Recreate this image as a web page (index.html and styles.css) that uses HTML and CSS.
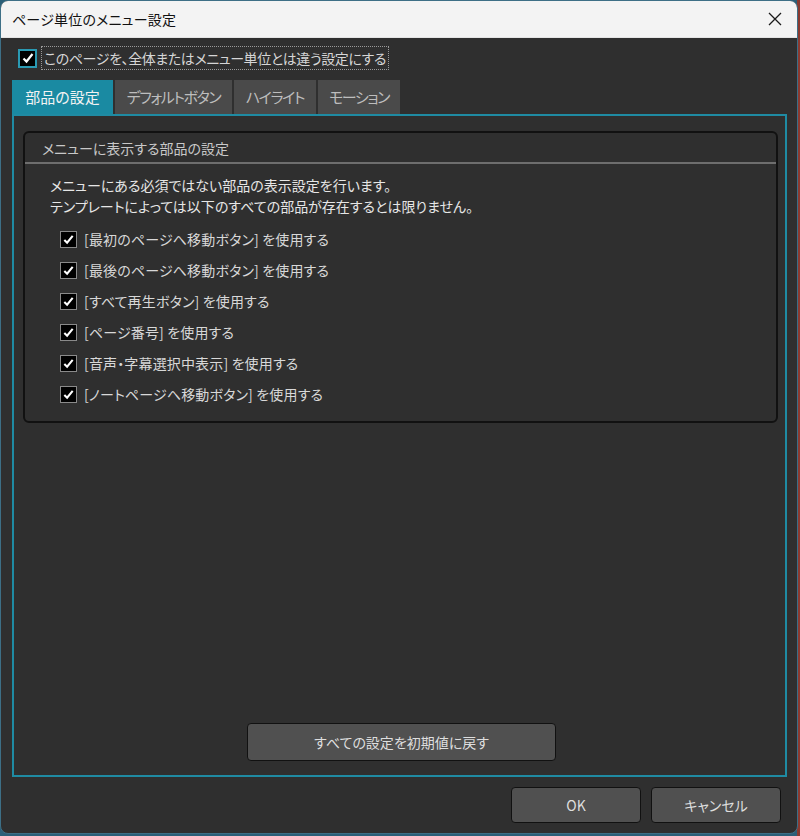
FILE: index.html
```html
<!DOCTYPE html>
<html>
<head>
	<meta charset="UTF-8">
	<title>ページ単位のメニュー設定</title>
	<link rel="stylesheet" href="styles.css">
</head>
<body>
	<div class="window">
		<div class="titlebar">
			<span class="title">ページ単位のメニュー設定</span>
			<svg class="close" width="14" height="14" viewBox="0 0 14 14"><path d="M1 1L13 13M13 1L1 13" stroke="#1a1a1a" stroke-width="1.3"/></svg>
		</div>
		<div class="content">
			<div class="override">
				<span class="chk focus">
					<svg width="14" height="14" viewBox="0 0 14 14"><path d="M2.5 7.5L5.5 10.5L11.5 3" fill="none" stroke="#fff" stroke-width="2.2"/></svg>
				</span>
				<span class="override_label">このページを、全体またはメニュー単位とは違う設定にする</span>
			</div>
			<div class="tabs">
				<div class="tab active tab_w1">部品の設定</div>
				<div class="tab kana tab_w2">デフォルトボタン</div>
				<div class="tab kana tab_w3">ハイライト</div>
				<div class="tab kana tab_w3">モーション</div>
			</div>
			<div class="panel">
				<div class="group">
					<div class="group_head">メニューに表示する部品の設定</div>
					<div class="group_body">
						<p class="desc">メニューにある必須ではない部品の表示設定を行います。<br>テンプレートによっては以下のすべての部品が存在するとは限りません。</p>
						<div class="items">
							<div class="item"><span class="chk"><svg width="13" height="13" viewBox="0 0 14 14"><path d="M2.5 7.5L5.5 10.5L11.5 3" fill="none" stroke="#fff" stroke-width="2.2"/></svg></span>[最初のページへ移動ボタン] を使用する</div>
							<div class="item"><span class="chk"><svg width="13" height="13" viewBox="0 0 14 14"><path d="M2.5 7.5L5.5 10.5L11.5 3" fill="none" stroke="#fff" stroke-width="2.2"/></svg></span>[最後のページへ移動ボタン] を使用する</div>
							<div class="item"><span class="chk"><svg width="13" height="13" viewBox="0 0 14 14"><path d="M2.5 7.5L5.5 10.5L11.5 3" fill="none" stroke="#fff" stroke-width="2.2"/></svg></span>[すべて再生ボタン] を使用する</div>
							<div class="item"><span class="chk"><svg width="13" height="13" viewBox="0 0 14 14"><path d="M2.5 7.5L5.5 10.5L11.5 3" fill="none" stroke="#fff" stroke-width="2.2"/></svg></span>[ページ番号] を使用する</div>
							<div class="item"><span class="chk"><svg width="13" height="13" viewBox="0 0 14 14"><path d="M2.5 7.5L5.5 10.5L11.5 3" fill="none" stroke="#fff" stroke-width="2.2"/></svg></span>[音声・字幕選択中表示] を使用する</div>
							<div class="item"><span class="chk"><svg width="13" height="13" viewBox="0 0 14 14"><path d="M2.5 7.5L5.5 10.5L11.5 3" fill="none" stroke="#fff" stroke-width="2.2"/></svg></span>[ノートページへ移動ボタン] を使用する</div>
						</div>
					</div>
				</div>
				<div class="reset_row">
					<div class="btn reset">すべての設定を初期値に戻す</div>
				</div>
			</div>
		</div>
		<div class="footer">
			<div class="btn">OK</div>
			<div class="btn">キャンセル</div>
		</div>
	</div>
</body>
</html>
```

FILE: styles.css
```css
*{
	margin: 0;
	padding: 0;
	box-sizing: border-box;
}
body{
	width: 800px;
	height: 836px;
	overflow: hidden;
	background: linear-gradient(to right, #2b5f78 797px, #8a3a30 797px);
	font-family: "Noto Sans CJK JP", "Noto Sans", sans-serif;
	font-feature-settings: "palt";
}
.window{
	width: 798px;
	height: 834px;
	background: #2f2f2f;
	border: 1px solid #3d6f86;
	border-radius: 8px;
	overflow: hidden;
	display: flex;
	flex-direction: column;
}
.titlebar{
	height: 37px;
	flex: none;
	background: #f3f3f3;
	border-bottom: 1px solid #e4e4e4;
	display: flex;
	align-items: center;
	justify-content: space-between;
	padding: 0 15px 0 11px;
}
.title{
	font-size: 14px;
	color: #111;
	letter-spacing: 0.2px;
}
.content{
	flex: 1;
	display: flex;
	flex-direction: column;
	padding: 8px 10px 0 11px;
}
.override{
	display: flex;
	align-items: center;
	height: 24px;
	padding-left: 6px;
}
.chk{
	width: 17px;
	height: 17px;
	flex: none;
	background: #000;
	border: 1px solid #8a8a8a;
	display: flex;
	align-items: center;
	justify-content: center;
}
.chk.focus{
	width: 19px;
	height: 19px;
	border: 2px solid #2a9ab3;
}
.override_label{
	margin-left: 4px;
	height: 24px;
	line-height: 22px;
	padding: 0 2px;
	border: 1px dotted #9a9a9a;
	font-size: 14px;
	letter-spacing: -0.4px;
	color: #d6d6d6;
}
.tabs{
	display: flex;
	gap: 2px;
	margin-top: 10px;
	height: 34px;
}
.tab{
	background: #4a4a4a;
	color: #bdbdbd;
	font-size: 15px;
	line-height: 34px;
	text-align: center;
}
.tab.kana{
	letter-spacing: -1.4px;
}
.tab_w1{
	width: 101px;
}
.tab_w2{
	width: 117px;
}
.tab_w3{
	width: 82px;
}
.tab.active{
	background: #1a8aa2;
	color: #f2f2f2;
}
.panel{
	flex: 1;
	border: 2px solid #1f8ba3;
	padding: 15px 7px 14px 9px;
	display: flex;
	flex-direction: column;
}
.group{
	height: 292px;
	border: 2px solid #111;
	border-radius: 6px;
}
.group_head{
	height: 31px;
	line-height: 31px;
	padding-left: 17px;
	font-size: 14px;
	color: #c8c8c8;
	border-bottom: 2px solid #6e6e6e;
}
.group_body{
	padding: 11px 0 0 25px;
}
.desc{
	font-size: 14px;
	line-height: 21px;
	color: #e6e6e6;
}
.items{
	margin-top: 14px;
	padding-left: 10px;
	display: flex;
	flex-direction: column;
	gap: 14px;
}
.item{
	display: flex;
	align-items: center;
	gap: 7px;
	font-size: 14px;
	letter-spacing: 0.15px;
	line-height: 17px;
	color: #d8d8d8;
}
.reset_row{
	margin-top: auto;
	display: flex;
	justify-content: center;
}
.btn{
	width: 130px;
	height: 36px;
	background: #505050;
	border: 1px solid #111;
	border-radius: 4px;
	color: #dedede;
	font-size: 14px;
	display: flex;
	align-items: center;
	justify-content: center;
}
.btn.reset{
	width: 309px;
	height: 38px;
	margin-left: 2px;
}
.footer{
	display: flex;
	justify-content: flex-end;
	gap: 10px;
	padding: 10px 16px 10px 0;
}
```
